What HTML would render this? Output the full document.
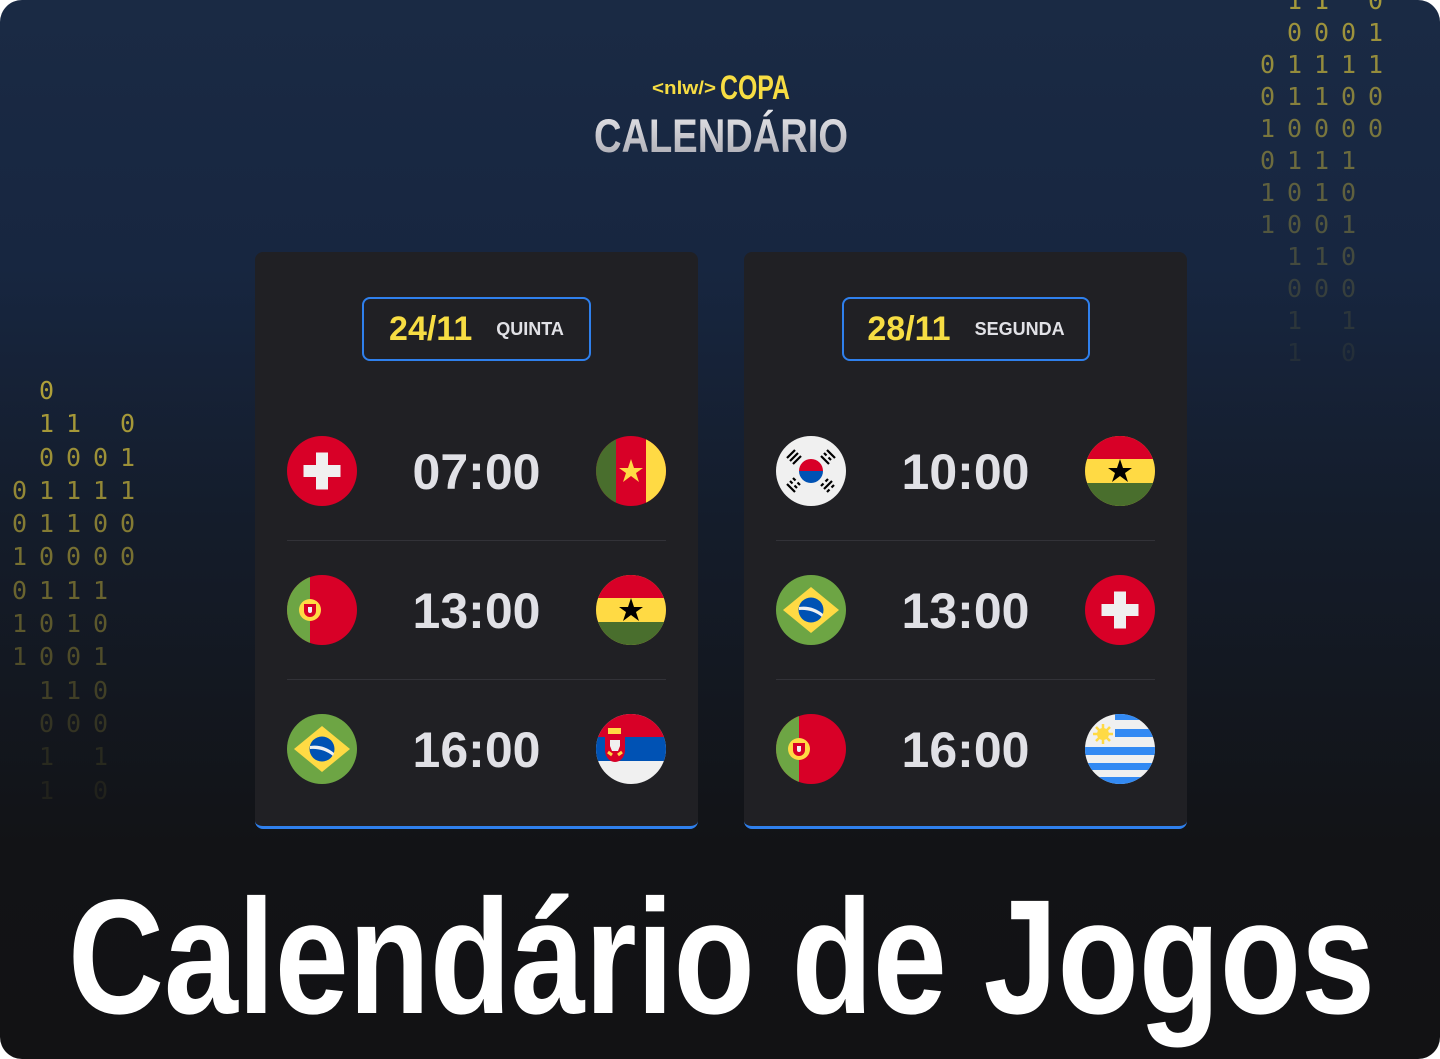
<!DOCTYPE html>
<html><head><meta charset="utf-8"><style>
html,body{margin:0;padding:0;background:#fff;}
#c{position:relative;width:1440px;height:1059px;overflow:hidden;border-radius:22px;background:linear-gradient(180deg,#1a2a44 0%,#172640 25%,#141c2a 50%,#121316 80%,#121214 100%);font-family:"Liberation Sans",sans-serif;}
.bin{position:absolute;font-family:"DejaVu Sans Mono","Liberation Mono",monospace;font-size:25px;color:#c9b63a;}
.bin div{height:33.3px;white-space:pre;}
.bin span{display:inline-block;width:27px;text-align:left;}
.card{position:absolute;top:252px;width:443px;height:574px;background:#202024;border-radius:8px;border-bottom:3px solid #2f80ed;}
.date{position:absolute;top:45px;height:64px;border:2px solid #2f80ed;border-radius:8px;box-sizing:border-box;display:flex;align-items:center;justify-content:center;gap:24px;}
.date b{color:#f7dd43;font-size:34px;}
.date i{font-style:normal;color:#e1e1e6;font-weight:bold;font-size:18px;}
.row{position:absolute;left:32px;width:379px;height:70px;}
.row svg{position:absolute;top:0;width:70px;height:70px;}
.row .t{position:absolute;left:0;right:0;text-align:center;top:6px;font-size:50px;font-weight:bold;color:#e1e1e6;line-height:60px;}
.hr{position:absolute;left:32px;width:379px;height:1px;background:#323238;}
</style></head><body><div id="c">
<svg width="0" height="0" style="position:absolute"><defs>
<clipPath id="cc"><circle cx="35" cy="35" r="35"/></clipPath>
<symbol id="sui" viewBox="0 0 70 70"><circle cx="35" cy="35" r="35" fill="#d80027"/><rect x="16.5" y="29" width="37" height="12" fill="#f0f0f0"/><rect x="29" y="16.5" width="12" height="37" fill="#f0f0f0"/></symbol>
<symbol id="cmr" viewBox="0 0 70 70"><g clip-path="url(#cc)"><rect width="70" height="70" fill="#d80027"/><rect width="20" height="70" fill="#496e2d"/><rect x="50" width="20" height="70" fill="#ffda44"/><polygon points="35,23 38,32 47,32 40,37 43,46 35,40 27,46 30,37 23,32 32,32" fill="#ffda44"/></g></symbol>
<symbol id="gha" viewBox="0 0 70 70"><g clip-path="url(#cc)"><rect width="70" height="70" fill="#ffda44"/><rect width="70" height="23" fill="#d80027"/><rect y="47" width="70" height="23" fill="#496e2d"/><polygon points="35,23 38,32 47,32 40,37 43,46 35,40 27,46 30,37 23,32 32,32" fill="#000"/></g></symbol>
<symbol id="por" viewBox="0 0 70 70"><g clip-path="url(#cc)"><rect width="70" height="70" fill="#d80027"/><rect width="23" height="70" fill="#6da544"/><circle cx="23" cy="35" r="11" fill="#ffda44"/><path d="M17 29h12v7a6 6 0 0 1-12 0z" fill="#d80027"/><path d="M21 32h4v4a2 2 0 0 1-4 0z" fill="#f0f0f0"/></g></symbol>
<symbol id="bra" viewBox="0 0 70 70"><circle cx="35" cy="35" r="35" fill="#6da544"/><polygon points="35,12 63,35 35,58 7,35" fill="#ffda44"/><circle cx="35" cy="35" r="12.5" fill="#0052b4"/><path d="M23 32 Q36 30 47 39 L46 42 Q36 34 23 35z" fill="#f0f0f0"/></symbol>
<symbol id="srb" viewBox="0 0 70 70"><g clip-path="url(#cc)"><rect width="70" height="70" fill="#f0f0f0"/><rect width="70" height="23" fill="#d80027"/><rect y="23" width="70" height="24" fill="#0052b4"/><rect x="12" y="14" width="13" height="6" fill="#ffda44"/><path d="M9 22h20v14a10 12 0 0 1-20 0z" fill="#d80027"/><path d="M14 26h10v6l-2 5h-6l-2-5z" fill="#f0f0f0"/><path d="M12 38l4 3M26 38l-4 3" stroke="#ffda44" stroke-width="3"/></g></symbol>
<symbol id="kor" viewBox="0 0 70 70"><circle cx="35" cy="35" r="35" fill="#f0f0f0"/><path d="M23 35a12 12 0 0 1 24 0z" fill="#d80027"/><path d="M23 35a12 12 0 0 0 24 0z" fill="#0052b4"/><g stroke="#000" stroke-width="2.2"><path d="M11 22l8-8M14 25l8-8M17 28l8-8"/><path d="M45 20l8 8M48 17l2.5 2.5M52.5 21.5l2.5 2.5M51 14l8 8"/><path d="M11 48l8 8M14 45l2.5 2.5M18.5 49.5l2.5 2.5M17 42l2.5 2.5M21.5 46.5l2.5 2.5"/><path d="M45 50l2.5-2.5M49.5 45.5l2.5-2.5M48 53l8-8M51 56l2.5-2.5M55.5 51.5l2.5-2.5"/></g></symbol>
<symbol id="uru" viewBox="0 0 70 70"><g clip-path="url(#cc)"><rect width="70" height="70" fill="#f0f0f0"/><g fill="#338af3"><rect x="30" y="0" width="40" height="6"/><rect x="30" y="15" width="40" height="8"/><rect y="33" width="70" height="8"/><rect y="49" width="70" height="7"/><rect y="63" width="70" height="7"/></g><circle cx="18" cy="20" r="6" fill="#ffda44"/><g stroke="#ffda44" stroke-width="2.5"><path d="M18 10v20M8 20h20M11 13l14 14M25 13l-14 14"/></g></g></symbol>
</defs></svg>

<div class="bin" style="left:12px;top:376px;">
<div style="opacity:.85"><span> </span><span>0</span></div>
<div style="opacity:.8"><span> </span><span>1</span><span>1</span><span> </span><span>0</span></div>
<div style="opacity:.75"><span> </span><span>0</span><span>0</span><span>0</span><span>1</span></div>
<div style="opacity:.7"><span>0</span><span>1</span><span>1</span><span>1</span><span>1</span></div>
<div style="opacity:.62"><span>0</span><span>1</span><span>1</span><span>0</span><span>0</span></div>
<div style="opacity:.55"><span>1</span><span>0</span><span>0</span><span>0</span><span>0</span></div>
<div style="opacity:.48"><span>0</span><span>1</span><span>1</span><span>1</span></div>
<div style="opacity:.4"><span>1</span><span>0</span><span>1</span><span>0</span></div>
<div style="opacity:.33"><span>1</span><span>0</span><span>0</span><span>1</span></div>
<div style="opacity:.25"><span> </span><span>1</span><span>1</span><span>0</span></div>
<div style="opacity:.18"><span> </span><span>0</span><span>0</span><span>0</span></div>
<div style="opacity:.12"><span> </span><span>1</span><span> </span><span>1</span></div>
<div style="opacity:.08"><span> </span><span>1</span><span> </span><span>0</span></div>
</div>
<div class="bin" style="left:1260px;top:-14px;">
<div style="opacity:.8;height:32px"><span> </span><span>1</span><span>1</span><span> </span><span>0</span></div>
<div style="opacity:.75;height:32px"><span> </span><span>0</span><span>0</span><span>0</span><span>1</span></div>
<div style="opacity:.7;height:32px"><span>0</span><span>1</span><span>1</span><span>1</span><span>1</span></div>
<div style="opacity:.62;height:32px"><span>0</span><span>1</span><span>1</span><span>0</span><span>0</span></div>
<div style="opacity:.55;height:32px"><span>1</span><span>0</span><span>0</span><span>0</span><span>0</span></div>
<div style="opacity:.48;height:32px"><span>0</span><span>1</span><span>1</span><span>1</span></div>
<div style="opacity:.4;height:32px"><span>1</span><span>0</span><span>1</span><span>0</span></div>
<div style="opacity:.33;height:32px"><span>1</span><span>0</span><span>0</span><span>1</span></div>
<div style="opacity:.25;height:32px"><span> </span><span>1</span><span>1</span><span>0</span></div>
<div style="opacity:.18;height:32px"><span> </span><span>0</span><span>0</span><span>0</span></div>
<div style="opacity:.12;height:32px"><span> </span><span>1</span><span> </span><span>1</span></div>
<div style="opacity:.08;height:32px"><span> </span><span>1</span><span> </span><span>0</span></div>
</div>

<svg style="position:absolute;left:0;top:0" width="1440" height="170">
<defs><linearGradient id="g1" x1="0" y1="0" x2="0" y2="1"><stop offset="0" stop-color="#e8e8ec"/><stop offset="1" stop-color="#a8a8b0"/></linearGradient></defs>
<text x="652" y="94" font-family="Liberation Sans" font-weight="bold" font-size="18" fill="#f7dd43" textLength="64" lengthAdjust="spacingAndGlyphs">&lt;nlw/&gt;</text>
<text x="720" y="99" font-family="Liberation Sans" font-weight="bold" font-size="34" fill="#f7dd43" textLength="70" lengthAdjust="spacingAndGlyphs">COPA</text>
<text x="594" y="152" font-family="Liberation Sans" font-weight="bold" font-size="47" fill="url(#g1)" textLength="254" lengthAdjust="spacingAndGlyphs">CALENDÁRIO</text>
</svg>

<div class="card" style="left:255px;">
<div class="date" style="left:107px;width:229px;"><b>24/11</b><i>QUINTA</i></div>
<div class="row" style="top:184px"><svg style="left:0"><use href="#sui"/></svg><div class="t">07:00</div><svg style="right:0"><use href="#cmr"/></svg></div>
<div class="hr" style="top:288px"></div>
<div class="row" style="top:323px"><svg style="left:0"><use href="#por"/></svg><div class="t">13:00</div><svg style="right:0"><use href="#gha"/></svg></div>
<div class="hr" style="top:427px"></div>
<div class="row" style="top:462px"><svg style="left:0"><use href="#bra"/></svg><div class="t">16:00</div><svg style="right:0"><use href="#srb"/></svg></div>
</div>

<div class="card" style="left:744px;">
<div class="date" style="left:98px;width:248px;"><b>28/11</b><i>SEGUNDA</i></div>
<div class="row" style="top:184px"><svg style="left:0"><use href="#kor"/></svg><div class="t">10:00</div><svg style="right:0"><use href="#gha"/></svg></div>
<div class="hr" style="top:288px"></div>
<div class="row" style="top:323px"><svg style="left:0"><use href="#bra"/></svg><div class="t">13:00</div><svg style="right:0"><use href="#sui"/></svg></div>
<div class="hr" style="top:427px"></div>
<div class="row" style="top:462px"><svg style="left:0"><use href="#por"/></svg><div class="t">16:00</div><svg style="right:0"><use href="#uru"/></svg></div>
</div>

<svg style="position:absolute;left:0;top:860px" width="1440" height="199">
<text x="68" y="153" font-family="Liberation Sans" font-weight="bold" font-size="163" fill="#ffffff" textLength="1307" lengthAdjust="spacingAndGlyphs">Calendário de Jogos</text>
</svg>
</div></body></html>
